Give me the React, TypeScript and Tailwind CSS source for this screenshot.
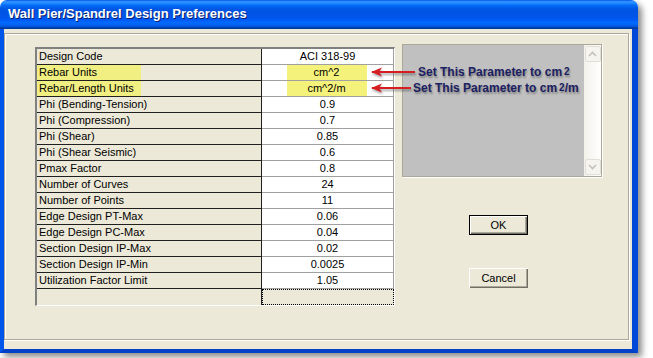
import React from 'react';

type Row = { label: string; value: string; mark?: boolean };

const rows: Row[] = [
  { label: 'Design Code', value: 'ACI 318-99' },
  { label: 'Rebar Units', value: 'cm^2', mark: true },
  { label: 'Rebar/Length Units', value: 'cm^2/m', mark: true },
  { label: 'Phi (Bending-Tension)', value: '0.9' },
  { label: 'Phi (Compression)', value: '0.7' },
  { label: 'Phi (Shear)', value: '0.85' },
  { label: 'Phi (Shear Seismic)', value: '0.6' },
  { label: 'Pmax Factor', value: '0.8' },
  { label: 'Number of Curves', value: '24' },
  { label: 'Number of Points', value: '11' },
  { label: 'Edge Design PT-Max', value: '0.06' },
  { label: 'Edge Design PC-Max', value: '0.04' },
  { label: 'Section Design IP-Max', value: '0.02' },
  { label: 'Section Design IP-Min', value: '0.0025' },
  { label: 'Utilization Factor Limit', value: '1.05' },
];

function Arrow({ length }: { length: number }) {
  return (
    <svg width={length + 4} height="14" viewBox={`0 0 ${length + 4} 14`} className="drop-shadow-[1px_2px_1px_rgba(0,0,0,0.35)]">
      <line x1="2" y1="6" x2={length} y2="6" stroke="#d41e24" strokeWidth="2" />
      <path d="M1 6 L12 1.5 L9 6 L12 10.5 Z" fill="#d41e24" />
    </svg>
  );
}

function XpButton({ label, primary }: { label: string; primary?: boolean }) {
  return (
    <button
      className={`w-[59px] h-[20px] bg-[#ece9d8] text-[11px] text-black leading-none flex items-center justify-center ${
        primary
          ? 'border border-black shadow-[inset_1px_1px_0_#ffffff,inset_-1px_-1px_0_#716f64,inset_-2px_-2px_0_#aca899]'
          : 'shadow-[inset_1px_1px_0_#ffffff,inset_-1px_-1px_0_#716f64,inset_-2px_-2px_0_#aca899]'
      }`}
    >
      {label}
    </button>
  );
}

function ScrollBtn({ up }: { up?: boolean }) {
  return (
    <div className="w-[16px] h-[16px] rounded-[2px] border border-[#e2e0d6] bg-[#f5f4ef] flex items-center justify-center">
      <svg width="9" height="6" viewBox="0 0 9 6">
        <path d={up ? 'M1 5 L4.5 1.5 L8 5' : 'M1 1 L4.5 4.5 L8 1'} fill="none" stroke="#c3c1b8" strokeWidth="1.6" />
      </svg>
    </div>
  );
}

export default function App() {
  return (
    <div className="relative w-[653px] h-[358px] bg-white overflow-hidden font-['Liberation_Sans',Arial,sans-serif]">
      {/* Window */}
      <div className="w-[638px] h-[353px] flex flex-col rounded-t-[7px] shadow-[4px_4px_6px_rgba(0,0,0,0.45)]">
        {/* Title bar */}
        <div className="h-[29px] shrink-0 rounded-t-[7px] flex items-center pl-[8px] pb-[2px] bg-[linear-gradient(to_bottom,#0058ee_0%,#3593ff_6%,#288eff_10%,#127dff_14%,#036ffc_18%,#0262ee_24%,#0057e5_30%,#0054e3_40%,#0055eb_60%,#005bf5_70%,#026afe_78%,#0062ef_86%,#0052d6_92%,#0040ab_96%,#003092_100%)]">
          <span className="text-white font-bold text-[13px] [text-shadow:1px_1px_0_#0a1e6e]">
            Wall Pier/Spandrel Design Preferences
          </span>
        </div>

        {/* Body */}
        <div className="flex-1 bg-[#ece9d8] border-l-4 border-r-[6px] border-b-4 border-l-[#0055ea] border-r-[#0048d8] border-b-[#0041c8] pt-[4px] pr-[3px] pb-[9px]">
          <div className="h-full border border-[#aca899] shadow-[inset_1px_1px_0_#ffffff,1px_1px_0_#ffffff] flex items-start pl-[30px] pt-[10px]">
            {/* Grid */}
            <div className="mt-[3px] border-t-2 border-l-2 border-t-[#808080] border-l-[#808080] border-b border-r border-b-white border-r-white">
              {rows.map((r) => (
                <div key={r.label} className="flex h-[16px] text-[11px] text-black">
                  <div className="w-[225px] h-full bg-[#ece9d8] border-r border-b border-[#202020] flex">
                    {r.mark ? (
                      <div className="w-[104px] h-full bg-[#f2ef82] pl-[2px] leading-[15px]">{r.label}</div>
                    ) : (
                      <div className="pl-[2px] leading-[15px]">{r.label}</div>
                    )}
                  </div>
                  <div className="w-[132px] h-full bg-white border-r border-b border-[#a0a0a0] flex justify-center">
                    {r.mark ? (
                      <div className="w-[80px] h-full bg-[#f5f27c] text-center leading-[15px] -ml-[2px]">{r.value}</div>
                    ) : (
                      <div className="text-center leading-[15px]">{r.value}</div>
                    )}
                  </div>
                </div>
              ))}
              <div className="flex h-[16px]">
                <div className="w-[225px] h-full bg-[#ece9d8] border-r border-[#202020]" />
                <div className="w-[132px] h-full bg-[#ece9d8] border border-dotted border-black" />
              </div>
            </div>

            {/* Right side */}
            <div className="ml-[7px] flex flex-col">
              <div className="w-[200px] h-[133px] border border-[#aca899] shadow-[1px_1px_0_#ffffff] flex bg-[#c0c0c0]">
                <div className="flex-1" />
                <div className="w-[17px] h-full bg-[linear-gradient(to_right,#f3f1ea,#ffffff)] flex flex-col justify-between items-center py-[1px]">
                  <ScrollBtn up />
                  <ScrollBtn />
                </div>
              </div>
              <div className="ml-[67px] mt-[38px] flex flex-col gap-[33px]">
                <XpButton label="OK" primary />
                <XpButton label="Cancel" />
              </div>
            </div>
          </div>
        </div>
      </div>

      {/* Annotations */}
      <div className="absolute left-[370px] top-[66px]">
        <Arrow length={45} />
      </div>
      <div className="absolute left-[418px] top-[64px] text-[12px] font-bold text-[#1b2062] leading-[16px] [text-shadow:1px_2px_2px_rgba(0,0,0,0.35)] whitespace-nowrap">
        Set This Parameter to cm<sup className="text-[10px] relative -top-[1px] ml-[2px]">2</sup>
      </div>
      <div className="absolute left-[370px] top-[82px]">
        <Arrow length={41} />
      </div>
      <div className="absolute left-[413px] top-[80px] text-[12px] font-bold text-[#1b2062] leading-[16px] [text-shadow:1px_2px_2px_rgba(0,0,0,0.35)] whitespace-nowrap">
        Set This Parameter to cm<sup className="text-[10px] relative -top-[1px] ml-[2px]">2</sup>/m
      </div>
    </div>
  );
}
